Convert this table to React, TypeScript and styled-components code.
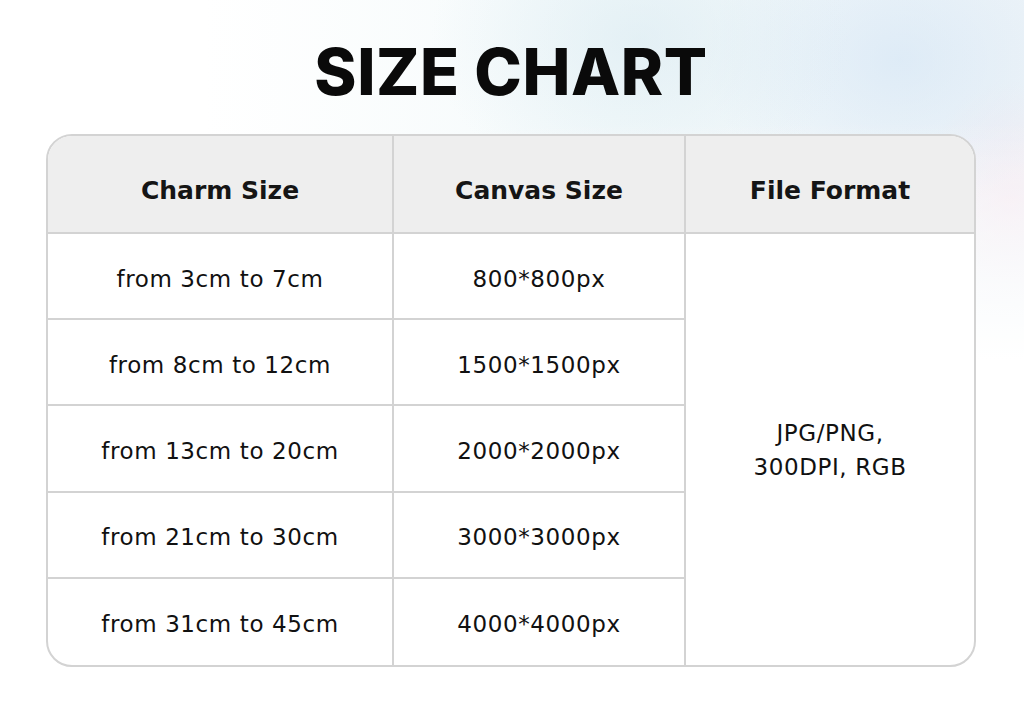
import styled, { createGlobalStyle } from "styled-components";

const rows = [
  ["from 3cm to 7cm", "800*800px"],
  ["from 8cm to 12cm", "1500*1500px"],
  ["from 13cm to 20cm", "2000*2000px"],
  ["from 21cm to 30cm", "3000*3000px"],
  ["from 31cm to 45cm", "4000*4000px"],
];

function App() {
  return (
    <>
      <GlobalStyle />
      <Page>
        <Title>SIZE CHART</Title>
        <Table>
          <HeadCell>Charm Size</HeadCell>
          <HeadCell>Canvas Size</HeadCell>
          <HeadCell $last>File Format</HeadCell>
          {rows.map(([charm, canvas], i) => (
            <Row key={charm}>
              <Cell $bottom={i < rows.length - 1}>{charm}</Cell>
              <Cell $bottom={i < rows.length - 1}>{canvas}</Cell>
            </Row>
          ))}
          <FormatCell>
            JPG/PNG,
            <br />
            300DPI, RGB
          </FormatCell>
        </Table>
      </Page>
    </>
  );
}

const GlobalStyle = createGlobalStyle`
body {
  margin: 0;
  background: #ffffff;
  font-family: "DejaVu Sans", Inter, sans-serif;
}`;

const Page = styled.div`
  width: 1024px;
  height: 712px;
  box-sizing: border-box;
  padding: 0 48px 0 46px;
  display: flex;
  flex-direction: column;
  align-items: stretch;
  background:
    linear-gradient(180deg, rgba(255, 255, 255, 0) 0px, rgba(255, 255, 255, 0) 120px, #ffffff 360px),
    radial-gradient(ellipse 300px 220px at 640px 40px, rgba(214, 232, 240, 0.55), transparent 70%),
    radial-gradient(ellipse 260px 200px at 900px 60px, rgba(210, 228, 245, 0.6), transparent 75%),
    radial-gradient(ellipse 120px 160px at 1010px 200px, rgba(250, 225, 235, 0.5), transparent 75%),
    linear-gradient(90deg, #ffffff 20%, #f4fafb 60%, #eef4f8 100%);
`;

const Title = styled.h1`
  margin: 0;
  height: 134px;
  flex-shrink: 0;
  display: flex;
  align-items: center;
  justify-content: center;
  padding-top: 8px;
  box-sizing: border-box;
  font-family: Inter, "Liberation Sans", sans-serif;
  font-weight: 800;
  font-size: 64px;
  letter-spacing: 0.6px;
  color: #0a0a0a;
`;

const Table = styled.div`
  display: grid;
  grid-template-columns: 346px 292px 1fr;
  grid-template-rows: 98px repeat(5, 1fr);
  border: 2px solid #d3d3d3;
  border-radius: 26px;
  overflow: hidden;
  background: #ffffff;
  box-sizing: border-box;
  height: 533px;
  flex-shrink: 0;
`;

const HeadCell = styled.div<{ $last?: boolean }>`
  background: #eeeeee;
  display: flex;
  align-items: center;
  justify-content: center;
  font-size: 25px;
  font-weight: 700;
  color: #151515;
  padding-top: 12px;
  border-bottom: 2px solid #d3d3d3;
  border-right: ${(p) => (p.$last ? "none" : "2px solid #d3d3d3")};
`;

const Row = styled.div`
  display: contents;
`;

const Cell = styled.div<{ $bottom?: boolean }>`
  display: flex;
  align-items: center;
  justify-content: center;
  font-size: 23px;
  font-weight: 400;
  letter-spacing: 0.6px;
  color: #111;
  padding-top: 5px;
  border-right: 2px solid #d3d3d3;
  border-bottom: ${(p) => (p.$bottom ? "2px solid #d3d3d3" : "none")};
`;

const FormatCell = styled.div`
  grid-column: 3;
  grid-row: 2 / span 5;
  display: flex;
  align-items: center;
  justify-content: center;
  text-align: center;
  font-size: 23px;
  letter-spacing: 0.6px;
  line-height: 34px;
  color: #111;
  padding-top: 1px;
`;

export default App;
